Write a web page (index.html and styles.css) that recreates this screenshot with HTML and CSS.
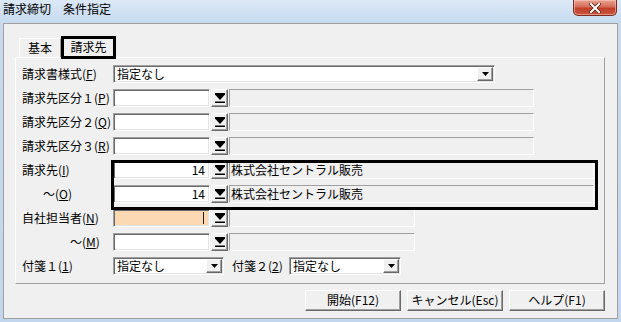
FILE: index.html
```html
<!DOCTYPE html>
<html lang="ja">
<head>
<meta charset="utf-8">
<title>請求締切 条件指定</title>
<link rel="stylesheet" href="styles.css">
</head>
<body>
<div class="window">
  <div class="titlebar">
    <span class="title">請求締切　条件指定</span>
    <div class="close">
      <svg width="12" height="10" viewBox="0 0 12 10"><path d="M2 1 L10 9 M10 1 L2 9" stroke="#5a2218" stroke-width="3.6" stroke-linecap="square"/><path d="M2 1 L10 9 M10 1 L2 9" stroke="#fff" stroke-width="2" stroke-linecap="square"/></svg>
    </div>
  </div>
  <div class="client">
    <div class="tabs">
      <div class="tab">基本</div>
      <div class="tab active">請求先</div>
    </div>
    <div class="panel">
      <div class="row">
        <span class="lbl">請求書様式(<u>F</u>)</span>
        <div class="combo w-form"><span class="ctext">指定なし</span><span class="cbtn"><svg width="7" height="4" viewBox="0 0 7 4"><path d="M0 0 H7 L3.5 4 Z" fill="#000"/></svg></span></div>
      </div>
      <div class="row">
        <span class="lbl">請求先区分１(<u>P</u>)</span>
        <div class="input"></div>
        <div class="ref"><svg width="10" height="10" viewBox="0 0 10 10"><path d="M0 0 H10 V1.5 L5 7 L0 1.5 Z" fill="#000"/><rect x="0" y="8.5" width="10" height="1.5" fill="#000"/></svg></div>
        <div class="ro w-a"></div>
      </div>
      <div class="row">
        <span class="lbl">請求先区分２(<u>Q</u>)</span>
        <div class="input"></div>
        <div class="ref"><svg width="10" height="10" viewBox="0 0 10 10"><path d="M0 0 H10 V1.5 L5 7 L0 1.5 Z" fill="#000"/><rect x="0" y="8.5" width="10" height="1.5" fill="#000"/></svg></div>
        <div class="ro w-a"></div>
      </div>
      <div class="row">
        <span class="lbl">請求先区分３(<u>R</u>)</span>
        <div class="input"></div>
        <div class="ref"><svg width="10" height="10" viewBox="0 0 10 10"><path d="M0 0 H10 V1.5 L5 7 L0 1.5 Z" fill="#000"/><rect x="0" y="8.5" width="10" height="1.5" fill="#000"/></svg></div>
        <div class="ro w-a"></div>
      </div>
      <div class="group">
        <div class="row">
          <span class="lbl">請求先(<u>I</u>)</span>
          <div class="input num">14</div>
          <div class="ref"><svg width="10" height="10" viewBox="0 0 10 10"><path d="M0 0 H10 V1.5 L5 7 L0 1.5 Z" fill="#000"/><rect x="0" y="8.5" width="10" height="1.5" fill="#000"/></svg></div>
          <div class="ro w-b">株式会社セントラル販売</div>
        </div>
        <div class="row">
          <span class="lbl ind-o">～(<u>O</u>)</span>
          <div class="input num">14</div>
          <div class="ref"><svg width="10" height="10" viewBox="0 0 10 10"><path d="M0 0 H10 V1.5 L5 7 L0 1.5 Z" fill="#000"/><rect x="0" y="8.5" width="10" height="1.5" fill="#000"/></svg></div>
          <div class="ro w-b">株式会社セントラル販売</div>
        </div>
        <div class="highlight"></div>
      </div>
      <div class="row">
        <span class="lbl">自社担当者(<u>N</u>)</span>
        <div class="input focus"><span class="caret"></span></div>
        <div class="ref"><svg width="10" height="10" viewBox="0 0 10 10"><path d="M0 0 H10 V1.5 L5 7 L0 1.5 Z" fill="#000"/><rect x="0" y="8.5" width="10" height="1.5" fill="#000"/></svg></div>
        <div class="ro w-c"></div>
      </div>
      <div class="row">
        <span class="lbl ind-m">～(<u>M</u>)</span>
        <div class="input"></div>
        <div class="ref"><svg width="10" height="10" viewBox="0 0 10 10"><path d="M0 0 H10 V1.5 L5 7 L0 1.5 Z" fill="#000"/><rect x="0" y="8.5" width="10" height="1.5" fill="#000"/></svg></div>
        <div class="ro w-c"></div>
      </div>
      <div class="row">
        <span class="lbl">付箋１(<u>1</u>)</span>
        <div class="combo w-s1"><span class="ctext">指定なし</span><span class="cbtn"><svg width="7" height="4" viewBox="0 0 7 4"><path d="M0 0 H7 L3.5 4 Z" fill="#000"/></svg></span></div>
        <span class="lbl2">付箋２(<u>2</u>)</span>
        <div class="combo w-s2"><span class="ctext">指定なし</span><span class="cbtn"><svg width="7" height="4" viewBox="0 0 7 4"><path d="M0 0 H7 L3.5 4 Z" fill="#000"/></svg></span></div>
      </div>
    </div>
    <div class="buttons">
      <div class="btn">開始(F12)</div>
      <div class="btn">キャンセル(Esc)</div>
      <div class="btn">ヘルプ(F1)</div>
    </div>
  </div>
</div>
</body>
</html>
```
FILE: styles.css
```css
* { box-sizing: border-box; }
html, body { margin: 0; padding: 0; }
body {
  width: 621px;
  height: 322px;
  overflow: hidden;
  background: #c6d9ef;
  font-family: "Noto Sans CJK JP", "Noto Sans", sans-serif;
  font-size: 12px;
  line-height: 18px;
  color: #000;
}
.window {
  width: 621px;
  height: 322px;
  display: flex;
  flex-direction: column;
  background: linear-gradient(to bottom, #dbe8f6 0px, #c7daef 23px, #c2d6ed 100%);
}
.titlebar {
  height: 23px;
  display: flex;
  align-items: flex-start;
  padding-left: 3px;
}
.title {
  line-height: 18px;
  padding-top: 0;
  color: #000;
}
.close {
  margin-left: auto;
  margin-right: 4px;
  width: 44px;
  height: 16px;
  border: 1px solid #7b2b1f;
  border-top: none;
  border-radius: 0 0 5px 5px;
  background: linear-gradient(to bottom, #e9a493 0%, #d66d58 45%, #c0402a 55%, #c9553c 100%);
  box-shadow: inset 0 0 0 1px rgba(255,210,200,0.5);
  display: flex;
  align-items: center;
  justify-content: center;
}
.client {
  margin: 0 3px;
  height: 296px;
  background: #f0f0f0;
  border: 1px solid #a0a0a0;
  padding: 12px 12px 0 11px;
  display: flex;
  flex-direction: column;
}
.tabs {
  display: flex;
  align-items: flex-end;
  padding-left: 4px;
}
.tab {
  height: 19px;
  width: 42px;
  text-align: center;
  line-height: 18px;
  background: #f0f0f0;
  border: 1px solid;
  border-color: #fff #a0a0a0 transparent #fff;
  border-bottom: none;
}
.tab.active {
  position: relative;
  z-index: 2;
  width: 55px;
  height: 23px;
  margin-bottom: -2px;
  border: 3px solid #000;
  line-height: 16px;
}
.panel {
  height: 227px;
  border: 1px solid;
  border-color: #fff #a0a0a0 #a0a0a0 #fff;
  padding: 7px 0 0 6px;
  display: flex;
  flex-direction: column;
  gap: 6px;
}
.row {
  height: 18px;
  display: flex;
  align-items: center;
}
.lbl {
  width: 91px;
  white-space: nowrap;
}
.lbl.ind-o { padding-left: 21px; }
.lbl.ind-m { padding-left: 48px; }
.lbl2 {
  margin-left: 8px;
  width: 57px;
  white-space: nowrap;
}
u { text-decoration: underline; text-underline-offset: 1px; }
.input, .combo {
  height: 18px;
  background: #fff;
  border: 1px solid;
  border-color: #a0a0a0 #fff #fff #a0a0a0;
  box-shadow: inset 1px 1px 0 #696969, inset -1px -1px 0 #e3e3e3;
}
.input {
  width: 97px;
  padding: 0 4px 0 2px;
  line-height: 16px;
  display: flex;
  align-items: center;
  justify-content: flex-end;
}
.input.focus { background: #fcd9b3; }
.caret {
  width: 1px;
  height: 12px;
  background: #222;
  margin-right: 1px;
}
.ref {
  margin-left: 1px;
  width: 17px;
  height: 18px;
  background: #f0f0f0;
  border: 1px solid;
  border-color: #fff #696969 #696969 #fff;
  box-shadow: inset -1px -1px 0 #a0a0a0;
  display: flex;
  align-items: center;
  justify-content: center;
  padding-bottom: 1px;
}
.ro {
  margin-left: 1px;
  height: 18px;
  background: #f0f0f0;
  border: 1px solid;
  border-color: #a0a0a0 #fff #fff #a0a0a0;
  padding-left: 1px;
  line-height: 16px;
  white-space: nowrap;
}
.w-a { width: 305px; }
.w-b { width: 365px; }
.w-c { width: 186px; }
.combo {
  display: flex;
  align-items: center;
  padding: 0 1px 0 3px;
}
.w-form { width: 382px; }
.w-s1 { width: 111px; }
.w-s2 { width: 112px; }
.ctext { flex: 1; line-height: 16px; white-space: nowrap; }
.cbtn {
  width: 16px;
  height: 14px;
  background: #f0f0f0;
  border: 1px solid;
  border-color: #fff #696969 #696969 #fff;
  box-shadow: inset -1px -1px 0 #a0a0a0;
  display: flex;
  align-items: center;
  justify-content: center;
}
.group {
  position: relative;
  display: flex;
  flex-direction: column;
  gap: 6px;
}
.highlight {
  position: absolute;
  left: 89px;
  top: -1px;
  width: 487px;
  height: 50px;
  border: 3px solid #000;
  pointer-events: none;
}
.buttons {
  margin-top: 6px;
  display: flex;
  justify-content: flex-end;
  gap: 6px;
}
.btn {
  width: 96px;
  height: 21px;
  background: #f0f0f0;
  border: 1px solid;
  border-color: #fff #696969 #696969 #fff;
  box-shadow: inset -1px -1px 0 #a0a0a0;
  text-align: center;
  line-height: 18px;
  white-space: nowrap;
}
```
